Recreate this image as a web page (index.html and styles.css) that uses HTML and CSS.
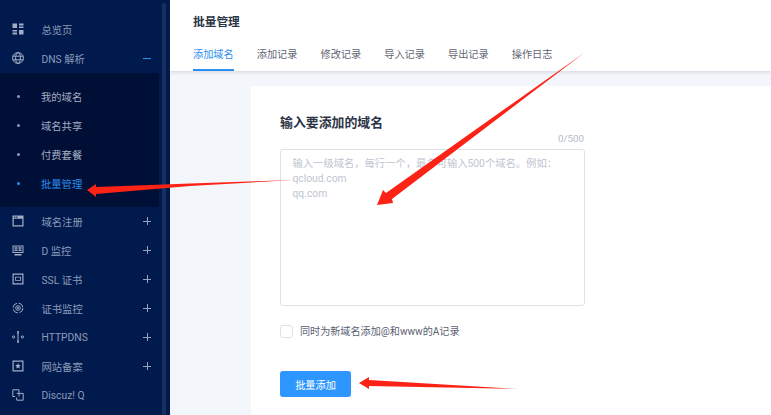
FILE: index.html
```html
<!DOCTYPE html>
<html lang="zh">
<head>
<meta charset="utf-8">
<title>批量管理</title>
<link rel="stylesheet" href="styles.css">
</head>
<body>
<div class="app">
  <aside class="sidebar">
    <nav class="nav">
      <a class="row"><svg class="ico" viewBox="0 0 12 12"><path class="f" d="M.5.500h4.500v4.500H.5zM7 .5h4.500v2H7zM7 3.500h4.500V5H7zM.5 7h4.500v1.500H.5zM.5 9.500h4.500v2H.5zM7 7h4.500v4.500H7z"/></svg><span class="label">总览页</span></a>
      <a class="row"><svg class="ico" viewBox="0 0 12 12"><circle class="s" cx="6" cy="6" r="5.400"/><ellipse class="s" cx="6" cy="6" rx="2.400" ry="5.400"/><path class="s" d="M.6 4.200h10.800M.6 7.800h10.800"/></svg><span class="label">DNS 解析</span><i class="toggle minus"></i></a>
      <div class="sub">
        <a class="subrow"><i class="dot"></i><span>我的域名</span></a>
        <a class="subrow"><i class="dot"></i><span>域名共享</span></a>
        <a class="subrow"><i class="dot"></i><span>付费套餐</span></a>
        <a class="subrow active"><i class="dot"></i><span>批量管理</span></a>
      </div>
      <a class="row"><svg class="ico" viewBox="0 0 12 12"><path class="f" fill-rule="evenodd" d="M.5.500h11v11H.5zM1.700 3.800v6.500h8.600V3.800zM2.300 1.500v1.400h1V1.500zM4.300 1.500v1.400h1V1.500z"/></svg><span class="label">域名注册</span><i class="toggle plus"></i></a>
      <a class="row"><svg class="ico" viewBox="0 0 12 12"><path class="f" fill-rule="evenodd" d="M.5 1.500h11v7.500H.5zM1.500 2.500v5.500h9V2.500zM2.500 3.300h3v1.500h-3zM6.500 3.300h3v1.500h-3zM2.500 5.500h3V7h-3zM6.500 5.500h3V7h-3zM2.500 10h7v1.500h-7z"/></svg><span class="label">D 监控</span><i class="toggle plus"></i></a>
      <a class="row"><svg class="ico" viewBox="0 0 12 12"><path class="f" fill-rule="evenodd" d="M.5.500h11v11H.5zM1.700 1.700v8.600h8.600V1.700zM3 3.800h6v4H3zM3.800 4.600v2.400h4.400V4.600z"/></svg><span class="label">SSL 证书</span><i class="toggle plus"></i></a>
      <a class="row"><svg class="ico" viewBox="0 0 12 12"><circle class="s" cx="6" cy="6" r="2.300"/><circle class="s dash" cx="6" cy="6" r="4.900"/><circle class="f" cx="6" cy="6" r="1"/></svg><span class="label">证书监控</span><i class="toggle plus"></i></a>
      <a class="row"><svg class="ico" viewBox="0 0 12 12"><circle class="s" cx="1.600" cy="6" r="1.100"/><circle class="s" cx="10.400" cy="6" r="1.100"/><path class="f" d="M5.200 0h1.600v3H5.200zM5.200 9h1.600v3H5.200zM5.500 3h1v6h-1z"/></svg><span class="label">HTTPDNS</span><i class="toggle plus"></i></a>
      <a class="row"><svg class="ico" viewBox="0 0 12 12"><path class="f" fill-rule="evenodd" d="M.5.500h11v11H.5zM1.700 1.700v8.600h8.600V1.700zM6 3l.8 1.900 2 .2-1.500 1.300.5 2L6 7.400l-1.800 1 .5-2-1.500-1.300 2-.2z"/></svg><span class="label">网站备案</span><i class="toggle plus"></i></a>
      <a class="row"><svg class="ico" viewBox="0 0 12 12"><path class="s" d="M7 7.500V.8H.8v6.700h2.400M4.700 4.400h6.500v6.800H4.700V8.500"/></svg><span class="label">Discuz! Q</span></a>
    </nav>
    <div class="track"></div>
  </aside>
  <main class="main">
    <header class="head">
      <h1 class="title">批量管理</h1>
      <div class="tabs">
        <a class="tab on">添加域名</a>
        <a class="tab">添加记录</a>
        <a class="tab">修改记录</a>
        <a class="tab">导入记录</a>
        <a class="tab">导出记录</a>
        <a class="tab">操作日志</a>
      </div>
    </header>
    <section class="card">
      <h2 class="heading">输入要添加的域名</h2>
      <div class="count">0/500</div>
      <div class="textarea">
        <div>输入一级域名，每行一个，最多可输入500个域名。例如：</div>
        <div>qcloud.com</div>
        <div>qq.com</div>
      </div>
      <label class="check"><i class="box"></i><span>同时为新域名添加@和www的A记录</span></label>
      <button class="btn" type="button">批量添加</button>
    </section>
  </main>
</div>
<svg class="arrows" viewBox="0 0 771 415" width="771" height="415">
  <polygon points="87,190 96,184 96,187 190,183.500 295,180 190,186 96,194 96,197"/>
  <polygon points="584,53 392,199 393,203 377,205 383,190 386,193"/>
  <polygon points="359,383 369,377 369,380 518,389 369,386 369,389"/>
</svg>
</body>
</html>
```
FILE: styles.css
```css
* { box-sizing: border-box; }
html, body { margin: 0; height: 100%; overflow: hidden; }
body { font-family: "Roboto", "Noto Sans CJK SC", sans-serif; background: #f3f6fa; }
.app { display: flex; width: 771px; height: 415px; overflow: hidden; }

.sidebar { position: relative; flex: 0 0 170px; background: #001a4e; padding-top: 14.500px; }
.nav { display: flex; flex-direction: column; width: 159px; }
.row { display: flex; align-items: center; height: 29px; padding-left: 12px; font-size: 10.300px; color: #8d9ab8; }
.ico { flex: 0 0 12px; width: 12px; height: 12px; margin-right: 17.500px; }
.ico .f { fill: #a3adc4; }
.ico .s { fill: none; stroke: #a3adc4; stroke-width: 1; }
.ico .dash { stroke-dasharray: 6 1.700; }
.label { flex: 1; }
.toggle { position: relative; flex: 0 0 8px; width: 8px; height: 8px; margin-right: 8px; }
.toggle::before, .plus::after { content: ""; position: absolute; background: #97a3bd; }
.toggle::before { left: 0; top: 3.500px; width: 8px; height: 1px; }
.plus::after { left: 3.500px; top: 0; width: 1px; height: 8px; }
.minus::before { background: #2e8ff0; }

.sub { display: flex; flex-direction: column; background: #000f36; padding: 9.500px 0 8.500px; }
.subrow { display: flex; align-items: center; height: 29px; padding-left: 16.500px; font-size: 10.300px; color: #a4adc1; }
.dot { flex: 0 0 3px; width: 3px; height: 3px; margin-right: 21.500px; border-radius: 50%; background: #8d9ab8; }
.active { color: #2b8ef0; }
.active .dot { background: #2b8ef0; }

.track { position: absolute; left: 162px; top: 3px; bottom: 0; width: 4px; border-radius: 2px; background: #172e60; }

.main { flex: 1; min-width: 0; display: flex; flex-direction: column; }
.head { flex: 0 0 71px; padding: 14px 0 0 23px; background: #fff; box-shadow: 0 1px 4px rgba(54, 74, 120, .2); position: relative; }
.title { margin: 0; font-size: 11.700px; line-height: 17px; font-weight: 700; color: #2b3345; }
.tabs { display: flex; gap: 23px; margin-top: 9px; }
.tab { height: 31px; padding-top: 7px; font-size: 10.200px; line-height: 15px; color: #5f6675; }
.on { color: #2b8ef0; border-bottom: 2px solid #2b8ef0; }

.card { display: flex; flex-direction: column; align-items: flex-start; width: 600px; height: 345px; margin: 15px 0 0 81px; padding: 27px 0 0 29px; background: #fff; border-radius: 3px; }
.heading { margin: 0; font-size: 12.900px; line-height: 19px; font-weight: 700; color: #2b3345; }
.count { width: 304px; margin-top: 0; font-size: 9.800px; line-height: 14px; text-align: right; color: #b4bcc9; }
.textarea { width: 305px; height: 157px; margin-top: 3px; padding: 6px 11.500px; border: 1px solid #dde2ea; border-radius: 3px; font-size: 10.300px; line-height: 15px; color: #bec5d0; white-space: nowrap; }
.check { display: flex; align-items: center; gap: 7px; margin-top: 19px; font-size: 10.100px; line-height: 13px; color: #5a6172; }
.box { flex: 0 0 13px; width: 13px; height: 13px; border: 1px solid #dde2ea; border-radius: 3px; background: #fff; }
.btn { width: 71px; height: 26px; margin-top: 33px; padding: 0; border: 0; border-radius: 3px; background: #2e96ff; color: #fff; font: inherit; font-size: 10.200px; }

.arrows { position: absolute; left: 0; top: 0; pointer-events: none; }
.arrows polygon { fill: #fb2316; }
```
